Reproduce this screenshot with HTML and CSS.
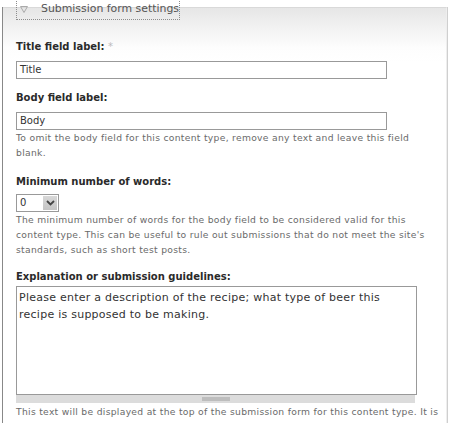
FILE: index.html
```html
<!DOCTYPE html>
<html>
<head>
<meta charset="utf-8">
<title>Submission form settings</title>
<link rel="stylesheet" href="styles.css">
</head>
<body>
<div class="page">
  <div class="fieldset">
    <div class="legend">
      <svg class="toggle" width="8" height="7" viewBox="0 0 8 7"><path d="M0.5 0.5 H7.5 L4 6.5 Z" fill="none" stroke="#aaa" stroke-width="1"/></svg>
      <span class="legend-text">Submission form settings</span>
    </div>

    <div class="item item-title">
      <div class="label">Title field label: <span class="req">*</span></div>
      <div class="input wide">Title</div>
    </div>

    <div class="item item-body">
      <div class="label">Body field label:</div>
      <div class="input wide">Body</div>
      <div class="desc">To omit the body field for this content type, remove any text and leave this field blank.</div>
    </div>

    <div class="item item-min">
      <div class="label">Minimum number of words:</div>
      <div class="select">
        <span class="select-value">0</span>
        <span class="select-btn"><svg width="9" height="6" viewBox="0 0 9 6"><path d="M1 1 L4.5 4.5 L8 1" fill="none" stroke="#444" stroke-width="1.8"/></svg></span>
      </div>
      <div class="desc">The minimum number of words for the body field to be considered valid for this content type. This can be useful to rule out submissions that do not meet the site's standards, such as short test posts.</div>
    </div>

    <div class="item item-help">
      <div class="label">Explanation or submission guidelines:</div>
      <div class="textarea">Please enter a description of the recipe; what type of beer this recipe is supposed to be making.</div>
      <div class="grippie"><span class="grip"></span></div>
      <div class="desc desc-wide">This text will be displayed at the top of the submission form for this content type. It is useful for helping or instructing your users.</div>
    </div>
  </div>
</div>
</body>
</html>
```
FILE: styles.css
```css
html, body {
  margin: 0;
  padding: 0;
  background: #fff;
  overflow: hidden;
}

body {
  font-family: "DejaVu Sans", Verdana, sans-serif;
  color: #333;
  width: 450px;
  height: 423px;
}

.page {
  margin-left: 2px;
  width: 444px;
  height: 423px;
  border-left: 1px solid #888;
  border-right: 1px solid #cfcfcf;
  box-sizing: content-box;
}

.fieldset {
  margin-top: 7px;
  border-top: 1px solid #d9d9d9;
  border-right: 1px solid #eee;
  background: linear-gradient(#e6e6e6 0px, #f3f3f3 22px, #fdfdfd 40px, #fff 55px);
  padding: 0 0 0 13px;
  height: 420px;
}

.legend {
  display: flex;
  align-items: center;
  width: 164px;
  height: 21px;
  margin-top: -9px;
  border: 1px dotted #8c8c8c;
  box-sizing: border-box;
}

.toggle {
  margin: -1px 0 0 3px;
  flex: none;
}

.legend-text {
  margin-left: 13px;
  font-size: 10.9px;
  color: #555;
  white-space: nowrap;
  margin-top: -2px;
}

.label {
  font-size: 10px;
  font-weight: bold;
  line-height: 14px;
  color: #2a2a2a;
}

.req {
  color: #bbb;
  font-weight: normal;
}

.item-title { margin-top: 20px; }
.item-title .label { margin-bottom: 7px; }

.item-body { margin-top: 12px; }
.item-body .label { margin-bottom: 7px; }

.item-min { margin-top: 15px; }
.item-min .label { margin-bottom: 5px; }

.item-help { margin-top: 13px; }
.item-help .label { margin-bottom: 2px; }

.input {
  height: 18px;
  border: 1px solid #999;
  background: #fff;
  box-sizing: border-box;
  font-size: 10px;
  line-height: 16px;
  padding-left: 3px;
  color: #333;
}

.wide { width: 371px; }

.desc {
  font-size: 9.2px;
  letter-spacing: 0.3px;
  line-height: 15px;
  color: #6a6a6a;
  width: 416px;
}

.desc-wide { width: 428px; }

.select {
  display: flex;
  width: 43px;
  height: 18px;
  border: 1px solid #999;
  box-sizing: border-box;
  background: #fff;
}

.select-value {
  flex: 1;
  font-size: 10px;
  line-height: 16px;
  padding-left: 3px;
}

.select-btn {
  width: 14px;
  margin: 1px;
  display: flex;
  align-items: center;
  justify-content: center;
  background: linear-gradient(#d8d8d8, #c4c4c4);
}

.textarea {
  width: 401px;
  height: 109px;
  border: 1px solid #999;
  box-sizing: border-box;
  background: #fff;
  font-size: 11px;
  letter-spacing: 0.25px;
  line-height: 17px;
  padding: 2px 30px 0 2px;
  color: #333;
}

.grippie {
  width: 399px;
  height: 8px;
  background: #dcdcdc;
  display: flex;
  justify-content: center;
  align-items: center;
  margin-bottom: 1px;
}

.grip {
  width: 28px;
  height: 4px;
  background: #bdbdbd;
}
```
